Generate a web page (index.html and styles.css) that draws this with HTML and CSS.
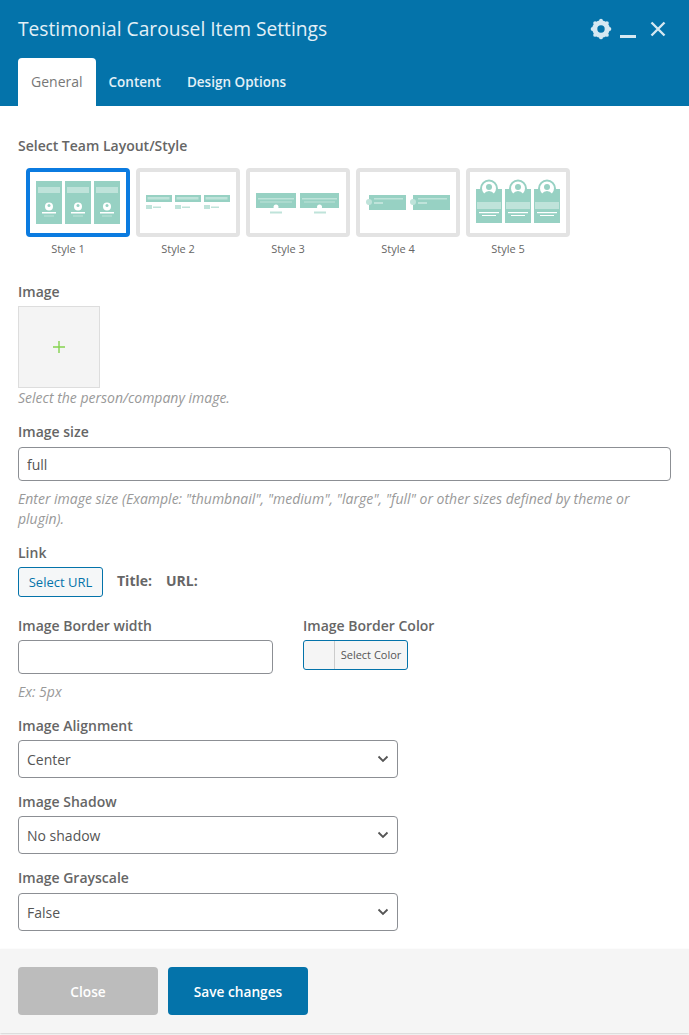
FILE: index.html
```html
<!DOCTYPE html>
<html lang="en">
<head>
  <meta charset="UTF-8" />
  <title>Testimonial Carousel Item Settings</title>
  <meta name="viewport" content="width=device-width, initial-scale=1" />
  <link rel="stylesheet" href="styles.css">
</head>
<body>
  <header class="modal-head">
    <div class="title-row">
      <h2>Testimonial Carousel Item Settings</h2>
      <div class="head-icons">
        <svg class="icon-gear" width="22" height="22" viewBox="0 0 22 22">
          <circle class="gear-ring" cx="11" cy="11" r="6.2" />
          <circle class="gear-tooth" cx="11" cy="2.6" r="1.9" />
          <circle class="gear-tooth" cx="16.9" cy="5.1" r="1.9" />
          <circle class="gear-tooth" cx="19.4" cy="11" r="1.9" />
          <circle class="gear-tooth" cx="16.9" cy="16.9" r="1.9" />
          <circle class="gear-tooth" cx="11" cy="19.4" r="1.9" />
          <circle class="gear-tooth" cx="5.1" cy="16.9" r="1.9" />
          <circle class="gear-tooth" cx="2.6" cy="11" r="1.9" />
          <circle class="gear-tooth" cx="5.1" cy="5.1" r="1.9" />
        </svg>
        <span class="icon-min"></span>
        <svg class="icon-close" width="16" height="16" viewBox="0 0 16 16">
          <path d="M1.5 1.5 L14.5 14.5 M14.5 1.5 L1.5 14.5" />
        </svg>
      </div>
    </div>
    <nav class="tabs">
      <a href="#" class="tab active">General</a>
      <a href="#" class="tab">Content</a>
      <a href="#" class="tab">Design Options</a>
    </nav>
  </header>

  <form class="modal-body" onsubmit="return false;">
    <div class="field">
      <label>Select Team Layout/Style</label>
      <div class="styles-list">
        <div class="style-item selected">
          <svg class="thumb" viewBox="0 0 96 61">
            <rect class="teal" x="6" y="9" width="26" height="43" />
            <rect class="teal" x="35" y="9" width="26" height="43" />
            <rect class="teal" x="64" y="9" width="26" height="43" />
            <rect class="pale" x="8" y="15" width="22" height="6" />
            <rect class="pale" x="37" y="15" width="22" height="6" />
            <rect class="pale" x="66" y="15" width="22" height="6" />
            <circle class="white" cx="19" cy="34.5" r="4" />
            <circle class="white" cx="48" cy="34.5" r="4" />
            <circle class="white" cx="77" cy="34.5" r="4" />
            <circle class="teal" cx="19" cy="33.5" r="1.5" />
            <circle class="teal" cx="48" cy="33.5" r="1.5" />
            <circle class="teal" cx="77" cy="33.5" r="1.5" />
            <rect class="white" x="12" y="40" width="14" height="1.5" />
            <rect class="white" x="41" y="40" width="14" height="1.5" />
            <rect class="white" x="70" y="40" width="14" height="1.5" />
            <rect class="pale" x="14" y="43.5" width="10" height="1" />
            <rect class="pale" x="43" y="43.5" width="10" height="1" />
            <rect class="pale" x="72" y="43.5" width="10" height="1" />
          </svg>
          <span>Style 1</span>
        </div>
        <div class="style-item">
          <svg class="thumb" viewBox="0 0 96 61">
            <rect class="teal" x="6" y="23" width="26" height="7" />
            <rect class="teal" x="35" y="23" width="26" height="7" />
            <rect class="teal" x="64" y="23" width="26" height="7" />
            <rect class="pale" x="7.5" y="25" width="22" height="2.5" />
            <rect class="pale" x="36.5" y="25" width="22" height="2.5" />
            <rect class="pale" x="65.5" y="25" width="22" height="2.5" />
            <rect class="pale" x="6" y="33" width="6" height="4" />
            <rect class="pale" x="35" y="33" width="6" height="4" />
            <rect class="pale" x="64" y="33" width="6" height="4" />
            <rect class="pale" x="13" y="34.5" width="8" height="1.5" />
            <rect class="pale" x="42" y="34.5" width="8" height="1.5" />
            <rect class="pale" x="71" y="34.5" width="8" height="1.5" />
          </svg>
          <span>Style 2</span>
        </div>
        <div class="style-item">
          <svg class="thumb" viewBox="0 0 96 61">
            <rect class="teal" x="6" y="21" width="40" height="15" />
            <rect class="teal" x="50" y="21" width="39" height="15" />
            <rect class="pale" x="8" y="26" width="36" height="1.5" />
            <rect class="pale" x="52" y="26" width="35" height="1.5" />
            <rect class="pale" x="10" y="29.5" width="32" height="1" />
            <rect class="pale" x="54" y="29.5" width="31" height="1" />
            <circle class="white" cx="26" cy="35" r="2.5" />
            <circle class="white" cx="69.5" cy="35" r="2.5" />
            <rect class="pale" x="20" y="39.5" width="12" height="2" />
            <rect class="pale" x="64" y="39.5" width="12" height="2" />
          </svg>
          <span>Style 3</span>
        </div>
        <div class="style-item">
          <svg class="thumb" viewBox="0 0 96 61">
            <rect class="teal" x="9" y="23" width="37" height="15" />
            <rect class="teal" x="53" y="23" width="37" height="15" />
            <circle class="pale" cx="9" cy="30" r="3" />
            <circle class="pale" cx="53" cy="30" r="3" />
            <rect class="pale" x="14" y="26" width="29" height="1.5" />
            <rect class="pale" x="58" y="26" width="29" height="1.5" />
            <rect class="pale" x="14" y="30" width="9" height="2" />
            <rect class="pale" x="58" y="30" width="9" height="2" />
          </svg>
          <span>Style 4</span>
        </div>
        <div class="style-item">
          <svg class="thumb" viewBox="0 0 96 61">
            <rect class="teal" x="6" y="17" width="26" height="34" />
            <rect class="teal" x="35" y="17" width="26" height="34" />
            <rect class="teal" x="64" y="17" width="26" height="34" />
            <circle class="ring" cx="19" cy="16.5" r="8" />
            <circle class="ring" cx="48" cy="16.5" r="8" />
            <circle class="ring" cx="77" cy="16.5" r="8" />
            <circle class="teal" cx="19" cy="15" r="3" />
            <circle class="teal" cx="48" cy="15" r="3" />
            <circle class="teal" cx="77" cy="15" r="3" />
            <path class="teal" d="M13.5 22 Q19 16 24.5 22 L19 25 Z" />
            <path class="teal" d="M42.5 22 Q48 16 53.5 22 L48 25 Z" />
            <path class="teal" d="M71.5 22 Q77 16 82.5 22 L77 25 Z" />
            <rect class="pale" x="7" y="30" width="24" height="7" />
            <rect class="pale" x="36" y="30" width="24" height="7" />
            <rect class="pale" x="65" y="30" width="24" height="7" />
            <rect class="white" x="9" y="40" width="20" height="1.2" />
            <rect class="white" x="38" y="40" width="20" height="1.2" />
            <rect class="white" x="67" y="40" width="20" height="1.2" />
            <rect class="white" x="12" y="43" width="14" height="1" />
            <rect class="white" x="41" y="43" width="14" height="1" />
            <rect class="white" x="70" y="43" width="14" height="1" />
          </svg>
          <span>Style 5</span>
        </div>
      </div>
    </div>

    <div class="field">
      <label>Image</label>
      <div class="image-picker">
        <svg width="14" height="14" viewBox="0 0 14 14"><path d="M7 1 V13 M1 7 H13" /></svg>
      </div>
      <p class="help">Select the person/company image.</p>
    </div>

    <div class="field">
      <label for="imgSize">Image size</label>
      <input type="text" id="imgSize" class="nudge" value="full" />
      <p class="help help-spaced">Enter image size (Example: "thumbnail", "medium", "large", "full" or other sizes defined by theme or plugin).</p>
    </div>

    <div class="field field-link">
      <label>Link</label>
      <div class="link-row">
        <button type="button" class="btn-url">Select URL</button>
        <strong>Title:</strong>
        <strong>URL:</strong>
      </div>
    </div>

    <div class="field two-col">
      <div class="col-width">
        <label for="borderW">Image Border width</label>
        <input type="text" id="borderW" />
        <p class="help help-spaced">Ex: 5px</p>
      </div>
      <div>
        <label>Image Border Color</label>
        <button type="button" class="btn-color"><i></i><span>Select Color</span></button>
      </div>
    </div>

    <div class="field">
      <label for="align">Image Alignment</label>
      <select id="align">
        <option>Center</option>
        <option>Left</option>
        <option>Right</option>
      </select>
    </div>

    <div class="field">
      <label for="shadow">Image Shadow</label>
      <select id="shadow">
        <option>No shadow</option>
      </select>
    </div>

    <div class="field field-last">
      <label for="gray">Image Grayscale</label>
      <select id="gray" class="nudge">
        <option>False</option>
        <option>True</option>
      </select>
    </div>
  </form>

  <footer class="modal-foot">
    <button type="button" class="btn btn-close">Close</button>
    <button type="button" class="btn btn-save">Save changes</button>
  </footer>
</body>
</html>
```

FILE: styles.css
```css
* {
  box-sizing: border-box;
}
body {
  margin: 0;
  background: #fff;
  font-family: "Open Sans", Arial, sans-serif;
  font-size: 14px;
  color: #555;
}
.modal-head {
  height: 106px;
  background: #0473aa;
  padding: 0 18px;
  display: flex;
  flex-direction: column;
  justify-content: space-between;
}
.title-row {
  display: flex;
  justify-content: space-between;
  align-items: center;
  height: 58px;
}
.title-row h2 {
  margin: 0;
  font-size: 19.2px;
  font-weight: 400;
  line-height: 28px;
  color: #e3f0f7;
}
.head-icons {
  display: flex;
  align-items: center;
  margin-right: 5px;
}
.gear-ring {
  fill: none;
  stroke: #d5e8f2;
  stroke-width: 5;
}
.gear-tooth {
  fill: #d5e8f2;
}
.icon-min {
  width: 16px;
  height: 3px;
  margin: 15px 14px 0 8px;
  background: #d5e8f2;
}
.icon-close path {
  stroke: #d5e8f2;
  stroke-width: 2.4;
  fill: none;
}
.tabs {
  display: flex;
}
.tab {
  height: 48px;
  padding: 0 13px;
  line-height: 48px;
  font-size: 13.5px;
  font-weight: 600;
  color: #e3f0f7;
  text-decoration: none;
}
.tab.active {
  background: #fff;
  color: #777;
  font-weight: 400;
  font-size: 14px;
  border-radius: 4px 4px 0 0;
}

.modal-body {
  padding: 30px 18px 0;
}
.field {
  margin-bottom: 14px;
}
.field-link {
  margin-bottom: 19px;
}
.field-last {
  margin-bottom: 18px;
}
label {
  display: block;
  margin-bottom: 4px;
  font-size: 14px;
  font-weight: 600;
  line-height: 20px;
  color: #666;
}
input[type="text"] {
  display: block;
  width: 100%;
  height: 34px;
  padding: 0 8px;
  border: 1px solid #8c8f94;
  border-radius: 4px;
  font-family: inherit;
  font-size: 14px;
  color: #555;
  background: #fff;
}
select {
  display: block;
  width: 380px;
  height: 38px;
  padding: 0 8px;
  border: 1px solid #8c8f94;
  border-radius: 4px;
  font-family: inherit;
  font-size: 14px;
  color: #555;
  appearance: none;
  background: #fff url("data:image/svg+xml,%3Csvg xmlns='http://www.w3.org/2000/svg' width='12' height='8' viewBox='0 0 12 8'%3E%3Cpath d='M1.5 1.5 L6 6 L10.5 1.5' fill='none' stroke='%23555' stroke-width='1.8'/%3E%3C/svg%3E") no-repeat right 8px center;
}
input[type="text"].nudge,
select.nudge {
  margin-top: 5px;
}
label:has(+ .nudge) {
  margin-bottom: 0;
}
.help {
  margin: 0;
  font-size: 14px;
  font-style: italic;
  line-height: 20px;
  color: #999;
}
.help-spaced {
  margin-top: 8px;
}

.styles-list {
  display: flex;
  gap: 6px;
  margin: 12px 0 24px 8px;
}
.style-item {
  width: 104px;
}
.thumb {
  display: block;
  width: 104px;
  height: 69px;
  border: 4px solid #e3e3e3;
  border-radius: 4px;
}
.style-item.selected .thumb {
  border-color: #0b7be0;
}
.style-item span {
  display: block;
  padding-right: 20px;
  margin-top: 3px;
  text-align: center;
  font-size: 11px;
  line-height: 18px;
  color: #666;
}
.teal {
  fill: #97d1c3;
}
.pale {
  fill: #bfe3da;
}
.white {
  fill: #fff;
}
.ring {
  fill: #fff;
  stroke: #97d1c3;
  stroke-width: 2;
}

.image-picker {
  width: 82px;
  height: 82px;
  display: flex;
  align-items: center;
  justify-content: center;
  background: #f4f4f4;
  border: 1px solid #ddd;
}
.image-picker path {
  stroke: #84d24e;
  stroke-width: 1.4;
  fill: none;
}

.link-row {
  display: flex;
  align-items: center;
  gap: 14px;
}
.link-row strong {
  font-weight: 700;
  color: #666;
  font-size: 14px;
  margin-top: -3px;
}
.btn-url {
  width: 85px;
  height: 30px;
  padding: 0;
  border: 1px solid #0473aa;
  border-radius: 3px;
  background: #f5f7f8;
  color: #0473aa;
  font-family: inherit;
  font-size: 13px;
}
.two-col {
  display: flex;
  gap: 30px;
}
.col-width {
  width: 255px;
}
.btn-color {
  display: flex;
  width: 105px;
  height: 30px;
  padding: 0;
  border: 1px solid #0473aa;
  border-radius: 3px;
  background: #f5f5f5;
  font-family: inherit;
}
.btn-color i {
  width: 31px;
  height: 100%;
  border-right: 1px solid #ccc;
}
.btn-color span {
  flex: 1;
  text-align: center;
  font-size: 11px;
  line-height: 28px;
  color: #555;
}

.modal-foot {
  display: flex;
  gap: 10px;
  height: 84px;
  padding: 18px;
  margin-bottom: 2px;
  background: #f5f5f5;
  box-shadow: 0 1px 2px rgba(0, 0, 0, 0.2);
}
.btn {
  width: 140px;
  height: 48px;
  border: none;
  border-radius: 4px;
  color: #fff;
  font-family: inherit;
  font-size: 13.7px;
  font-weight: 600;
}
.btn-close {
  background: #bcbcbc;
}
.btn-save {
  background: #0473aa;
}
```
